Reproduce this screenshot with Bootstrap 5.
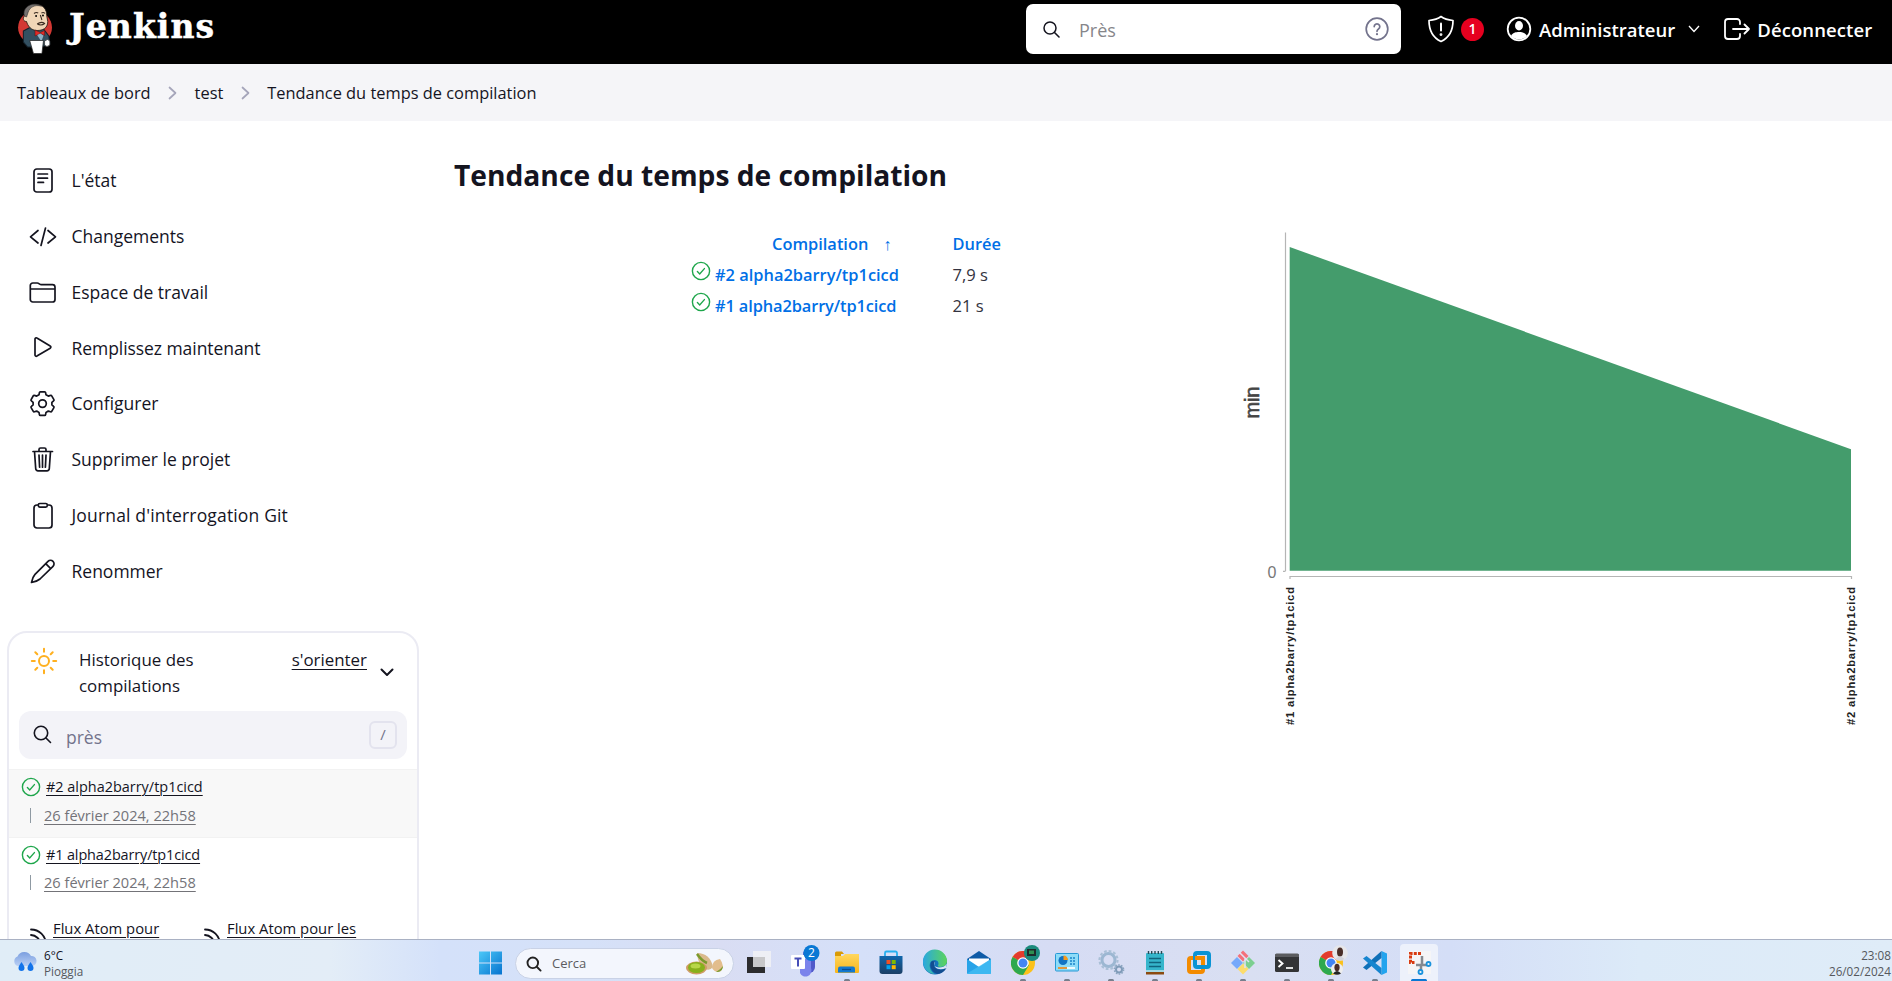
<!DOCTYPE html>
<html lang="fr">
<head>
<meta charset="utf-8">
<meta name="viewport" content="width=device-width, initial-scale=1">
<title>Tendance du temps de compilation [Jenkins]</title>
<link rel="stylesheet" href="https://cdn.jsdelivr.net/npm/bootstrap@5.3.0/dist/css/bootstrap.min.css">
<style>
body{font-family:"Open Sans","Noto Sans",sans-serif;color:#14141f;font-size:17.5px;line-height:1.4;background:#fff}
svg{display:block;flex:none}
a{color:inherit}
.screen{height:939px}
.topbar{height:64px;background:#000}
.brand-name{font-family:"DejaVu Serif",serif;font-weight:700;font-size:33px;letter-spacing:1.1px;line-height:40px;margin-left:17px;margin-top:7px;-webkit-text-stroke:.5px #fff}
.brand-logo{margin:3px 0 0 17px}
.top-search{width:375px;height:50px;margin:4px 0 0;border-radius:7px;padding:0 12px 0 16px}
.top-search .hint{font-size:18px;color:#86868a;margin-left:18px;padding-top:4px}
.top-tools{height:50px;margin-top:4px;font-size:18.5px;font-weight:600;width:491px;padding-left:26px}
.top-tools .lbl{padding-top:2px}
.alert-count{width:23px;height:23px;background:#e6001f;font-size:14px;margin-left:6px}
.crumbs{height:57px;background:#f5f5f8;padding:0 0 0 17px;font-size:16.4px}
.crumbs span{padding-top:2px}
.side{width:420px}
.tasks{padding-top:31.600px}
.task-link{height:55.8px;padding-left:28px;gap:14.5px;text-decoration:none}
.history{width:412px;height:330px;margin:31.800px 0 0 7px;border:2px solid #ebebf3;border-radius:20px}
.history-head{height:78px;padding:14px 23px 0 21px;font-size:16.9px}
.history-head .ttl{margin-left:21px;width:130px;line-height:26px}
.uline{text-decoration:underline;text-decoration-thickness:1px;text-underline-offset:3px}
.find{height:48px;background:#f3f3f8;border-radius:12px;margin:0 10px;padding:0 10px 0 14px;color:#73738c}
.keycap{width:28px;height:28px;border:2px solid #e3e3ee;border-radius:6px;font-size:15px}
.build-row{height:69px;font-size:14.450px;padding:7px 0 0 12px}
.build-row .when{color:#737378;font-size:14.6px;height:20px;margin-top:8px;padding-left:9px}
.build-row .bar{width:1px;height:15px;background:#8f9aa3;margin-right:13px}
.build-row.hot{background:#f8f8f8;margin-top:10px;border-top:1px solid #f2f2f2;border-bottom:1px solid #f2f2f2}
.tight{letter-spacing:-.12px}
.feeds{font-size:14.8px;padding:11px 0 0 21px}
.trend h1{font-size:28.2px;font-weight:700;line-height:40px;margin:34px 0 33px}
.times{margin-left:237px;width:330px}
.times .line{height:31px}
.times a,.times .th-link{color:#006fe6;font-weight:600;text-decoration:none;font-size:16.400px;padding-top:1px}
.times .c1{width:261.500px}
.times .dur{font-size:16.6px;color:#333340}
.taskbar{height:42px;border-top:1px solid #a9b1c3;background:linear-gradient(90deg,#e0edf7 0,#e3edf7 330px,#d4e1fa 440px,#d5e1f8 590px,#d9ddf3 720px,#d5e0f9 860px,#d6dcf4 1050px,#d9dff2 1250px,#d4def7 1450px,#dceaf8 1640px,#dfecf8 100%);font-size:11.7px}
.weather{width:468px;padding:7px 0 0 12px}
.weather .wt{line-height:16px;margin-left:6px}
.tb-search{width:219px;height:31px;border-radius:16px;background:#f3f6fd;border:1px solid #c9d2e6;margin:8px 3px 0 3px;padding:0 8px 0 10px;font-size:13px;color:#5b5b60}
.clock{line-height:16px;padding:7px 1px 0 0;color:#55585d}
</style>
</head>
<body class="overflow-hidden">
<svg width="0" height="0" class="position-absolute">
  <defs>
    <symbol id="ok" viewBox="0 0 20 20"><circle cx="10" cy="10" r="8.6" fill="none" stroke="#1ea64b" stroke-width="1.4"/><path d="M6.4 10.6l2.3 2.3 4.7-5.3" fill="none" stroke="#1ea64b" stroke-width="1.4" stroke-linecap="round"/></symbol>
    <symbol id="next" viewBox="0 0 10 14"><path d="M1.5 1.5l6 5.5-6 5.5" fill="none" stroke="#a5a5ba" stroke-width="1.7" stroke-linecap="round" stroke-linejoin="round"/></symbol>
    <symbol id="rss" viewBox="0 0 20 20"><path d="M1 2.5A15 15 0 0 1 16 17M1 8A10 10 0 0 1 10.5 17" fill="none" stroke="#14141f" stroke-width="1.8" stroke-linecap="round"/><circle cx="3" cy="15.5" r="2"/></symbol>
    <symbol id="chrome" viewBox="0 0 24 24"><circle cx="12" cy="12" r="12" fill="#fbc11b"/><path d="M12 12L1.6 6A12 12 0 0 1 22.4 6z" fill="#e33b2e"/><path d="M12 12L1.6 6A12 12 0 0 0 12 24l6-10z" fill="#2da94f"/><circle cx="12" cy="12" r="5.8" fill="#fff"/><circle cx="12" cy="12" r="4.5" fill="#4285f4"/></symbol>
    <linearGradient id="gWin" x1="0" y1="0" x2="1" y2="1"><stop offset="0" stop-color="#4cc8f8"/><stop offset="1" stop-color="#0673cf"/></linearGradient>
    <linearGradient id="gEdge" x1="0" y1="0" x2="1" y2="0"><stop offset="0" stop-color="#2aa8e0"/><stop offset="1" stop-color="#5bd45b"/></linearGradient>
    <linearGradient id="gStore" x1="0" y1="0" x2="0" y2="1"><stop offset="0" stop-color="#1067ad"/><stop offset="1" stop-color="#1b3f66"/></linearGradient>
    <linearGradient id="gFold" x1="0" y1="0" x2="0" y2="1"><stop offset="0" stop-color="#ffd75e"/><stop offset="1" stop-color="#f8b51c"/></linearGradient>
    <linearGradient id="gCloud" x1="0" y1="0" x2="0" y2="1"><stop offset="0" stop-color="#7b9fe0"/><stop offset="1" stop-color="#b9d0f5"/></linearGradient>
  </defs>
</svg>

<div class="screen overflow-hidden">
  <header class="topbar d-flex align-items-start text-white">
    <svg class="brand-logo" width="35" height="52" viewBox="0 0 33 52" preserveAspectRatio="none">
      <ellipse cx="17" cy="24.500" rx="16" ry="16.500" fill="#d33833"/>
      <path d="M6 28l7-4 12 2 5 7 1 8-8 3H10l-4-5z" fill="#335061" stroke="#14212b"/>
      <path d="M7 13C6 6 12 1 18 1.500c7 0 10 5 10 11l1 6c0 7-5 9-10 9-6 0-9-5-10-9-3 0-4-3-2-5.500z" fill="#f0d6b7" stroke="#221a14" stroke-width=".8"/>
      <path d="M7 13C5 6 11 .800 17 1.200c3 0 5 1 6 2-6-2-11 1-12.500 6L9 14z" fill="#74706e" stroke="#333" stroke-width=".6"/>
      <path d="M16 10.500q2-1.500 4-.500M23 10q2-1 3.500.500M19 21q4-3 7-.500q-3 2.500-7 .5M22 12l1.500 5" fill="none" stroke="#3a2c22" stroke-width="1"/>
      <circle cx="18" cy="13" r=".9"/><circle cx="24.500" cy="12.500" r=".9"/>
      <path d="M17 27l5 2.500 4-2v5l-4-2-5 2.500z" fill="#e02a27" stroke="#5a0f0f" stroke-width=".5"/>
      <path d="M19 32l3-1.500 3 2-2 6z" fill="#8fb0c4"/>
      <path d="M12 37.500h13l-1.500 13h-8z" fill="#fff" stroke="#222" stroke-width=".7"/>
      <path d="M26 38q3-3 5 0v4q-3 3-5 0z" fill="#fff" stroke="#333" stroke-width=".7"/>
    </svg>
    <div class="brand-name">Jenkins</div>
    <div class="top-search bg-white ms-auto d-flex align-items-center">
      <svg width="19" height="19" viewBox="0 0 19 19"><circle cx="8" cy="8" r="6" fill="none" stroke="#14141f" stroke-width="1.500"/><path d="M12.500 12.500l4.500 4.500" stroke="#14141f" stroke-width="1.600" stroke-linecap="round"/></svg>
      <span class="hint">Près</span>
      <svg class="ms-auto" width="24" height="24" viewBox="0 0 24 24"><circle cx="12" cy="12" r="10.800" fill="none" stroke="#73738c" stroke-width="1.700"/><path d="M9.200 9.600a2.800 2.800 0 1 1 4.300 2.400c-1 .7-1.500 1.100-1.500 2.300" fill="none" stroke="#73738c" stroke-width="1.700" stroke-linecap="round"/><circle cx="12" cy="17.200" r="1.100" fill="#73738c"/></svg>
    </div>
    <div class="top-tools d-flex align-items-center">
      <svg width="28" height="28" viewBox="0 0 28 28" fill="none" stroke="#fff" stroke-width="1.700" stroke-linejoin="round" stroke-linecap="round"><path d="M14 1.500c3 2.300 7 3.500 12 4C26 15 22.500 22.500 14 26.500 5.500 22.500 2 15 2 5.500c5-.5 9-1.700 12-4z"/><path d="M14 8.500v7" stroke-width="2"/><circle cx="14" cy="19.600" r=".6"/></svg>
      <span class="alert-count rounded-circle d-flex align-items-center justify-content-center">1</span>
      <svg style="margin-left:22px" width="26" height="26" viewBox="0 0 26 26"><circle cx="13" cy="13" r="11.300" fill="none" stroke="#fff" stroke-width="1.800"/><ellipse cx="13" cy="9.800" rx="4" ry="4.700" fill="#fff"/><path d="M5 20c1.500-3.500 5-4 8-4s6.500.5 8 4c-4 4.500-12 4.500-16 0z" fill="#fff"/></svg>
      <span class="lbl" style="margin-left:7px">Administrateur</span>
      <svg style="margin-left:13px" width="12" height="8" viewBox="0 0 12 8"><path d="M1 1l5 5.500L11 1" fill="none" stroke="#fff" stroke-width="1.300"/></svg>
      <svg style="margin-left:24px" width="26" height="22" viewBox="0 0 26 22" fill="none" stroke="#fff" stroke-width="1.800" stroke-linecap="round" stroke-linejoin="round"><path d="M16 6V4a3 3 0 0 0-3-3H4a3 3 0 0 0-3 3v14a3 3 0 0 0 3 3h9a3 3 0 0 0 3-3v-2M9 11h16M20.500 6.500L25 11l-4.500 4.500"/></svg>
      <span class="lbl" style="margin-left:7px;letter-spacing:.1px">Déconnecter</span>
    </div>
  </header>

  <nav class="crumbs d-flex align-items-center">
    <span>Tableaux de bord</span>
    <svg style="margin:0 17px 0 17px" width="10" height="14"><use href="#next"/></svg>
    <span>test</span>
    <svg style="margin:0 16px 0 18px" width="10" height="14"><use href="#next"/></svg>
    <span>Tendance du temps de compilation</span>
  </nav>

  <div class="d-flex">
    <aside class="side flex-shrink-0">
      <div class="tasks d-flex flex-column">
        <a class="task-link d-flex align-items-center"><svg width="29" height="29" viewBox="0 0 29 29" fill="none" stroke="#14141f" stroke-width="1.700" stroke-linecap="round"><rect x="6" y="3" width="18" height="23" rx="2.800"/><path d="M10 8h9.500M10 12.200h9.500M10 16.400h5.500"/></svg><span>L'état</span></a>
        <a class="task-link d-flex align-items-center"><svg width="29" height="29" viewBox="0 0 29 29" fill="none" stroke="#14141f" stroke-width="1.700" stroke-linecap="round" stroke-linejoin="round"><path d="M10 8.500L2.500 14.800 10 21M20 8.500l7.500 6.300L20 21M17.500 6L13 23.500"/></svg><span>Changements</span></a>
        <a class="task-link d-flex align-items-center"><svg width="29" height="29" viewBox="0 0 29 29" fill="none" stroke="#14141f" stroke-width="1.700" stroke-linejoin="round"><path d="M2.300 7.500a2.500 2.500 0 0 1 2.500-2.500h4.500c1.500 0 2.500 1.700 4 1.700H24.500a2.500 2.500 0 0 1 2.500 2.500V21.500a2.500 2.500 0 0 1-2.500 2.500H4.800a2.500 2.500 0 0 1-2.500-2.500zM2.300 11H27"/></svg><span>Espace de travail</span></a>
        <a class="task-link d-flex align-items-center"><svg width="29" height="29" viewBox="0 0 29 29" fill="none" stroke="#14141f" stroke-width="1.700" stroke-linejoin="round"><path d="M7 6v16c0 1 1 1.600 1.900 1.100l13.300-7.900c.9-.5.9-1.700 0-2.200L8.900 5C8 4.400 7 5 7 6z"/></svg><span style="letter-spacing:-.06px">Remplissez maintenant</span></a>
        <a class="task-link d-flex align-items-center"><svg width="29" height="29" viewBox="0 0 29 29" fill="none" stroke="#14141f" stroke-width="1.700" stroke-linejoin="round"><path d="M12.300 2.800h4.400q.8 0 .9.8l.4 2.200 2.300 1.300 2.200-.7q.8-.3 1.200.4l2.200 3.800q.4.700-.3 1.200l-1.700 1.500v2.600l1.700 1.500q.7.500.3 1.200l-2.200 3.800q-.4.700-1.200.4l-2.200-.7-2.300 1.300-.4 2.200q-.1.800-.9.800h-4.400q-.8 0-.9-.8l-.4-2.200-2.300-1.300-2.200.7q-.8.3-1.200-.4l-2.200-3.800q-.4-.7.3-1.200l1.700-1.500v-2.600l-1.700-1.500q-.7-.5-.3-1.200l2.200-3.800q.4-.7 1.200-.4l2.200.7L11 5.800l.4-2.200q.1-.8.900-.8z"/><circle cx="14.500" cy="14.600" r="3.800"/></svg><span>Configurer</span></a>
        <a class="task-link d-flex align-items-center"><svg width="29" height="29" viewBox="0 0 29 29" fill="none" stroke="#14141f" stroke-width="1.700" stroke-linecap="round" stroke-linejoin="round"><path d="M5 6.500h19.500M11 6.200V4.500A1.500 1.500 0 0 1 12.500 3h4A1.500 1.500 0 0 1 18 4.500v1.700M6.500 6.500l1.200 17a2.300 2.300 0 0 0 2.300 2.300h9a2.300 2.300 0 0 0 2.300-2.300l1.200-17M11 10l.6 12.200M14.500 10v12.200M18 10l-.6 12.200"/></svg><span>Supprimer le projet</span></a>
        <a class="task-link d-flex align-items-center"><svg width="29" height="29" viewBox="0 0 29 29" fill="none" stroke="#14141f" stroke-width="1.700" stroke-linejoin="round"><rect x="6" y="4" width="18" height="23" rx="3"/><rect x="10.300" y="2.500" width="9" height="3.600" rx="1.500" fill="#fff"/></svg><span style="letter-spacing:.16px">Journal d'interrogation Git</span></a>
        <a class="task-link d-flex align-items-center"><svg width="29" height="29" viewBox="0 0 29 29" fill="none" stroke="#14141f" stroke-width="1.700" stroke-linejoin="round"><path d="M20 4.300a3.400 3.400 0 0 1 5 5L12 22q-3 2.500-8.500 3.500 1-5.500 3.500-8.200zM17.700 6.600l5 5"/></svg><span>Renommer</span></a>
      </div>

      <section class="history">
        <div class="history-head d-flex align-items-start">
          <svg width="28" height="28" viewBox="0 0 28 28" fill="none" stroke="#ffb01f" stroke-width="2" stroke-linecap="round"><circle cx="14" cy="14" r="5"/><path d="M14 1.800v3M14 23.200v3M1.800 14h3M23.200 14h3M5.300 5.300l2 2M20.700 20.700l2 2M22.700 5.300l-2 2M5.300 22.700l2-2"/></svg>
          <div class="ttl">Historique des compilations</div>
          <a class="uline ms-auto" style="line-height:26px">s'orienter</a>
          <svg style="margin:21px 0 0 13px" width="14" height="10" viewBox="0 0 14 10"><path d="M1.500 1.500L7 7l5.500-5.500" fill="none" stroke="#14141f" stroke-width="2" stroke-linecap="round" stroke-linejoin="round"/></svg>
        </div>
        <div class="find d-flex align-items-center">
          <svg width="19" height="19" viewBox="0 0 19 19" fill="none" stroke="#14141f" stroke-width="1.600" stroke-linecap="round"><circle cx="8" cy="8" r="6.700"/><path d="M13 13l4.500 4.500"/></svg>
          <span style="margin-left:14px;padding-top:4px">près</span>
          <span class="keycap ms-auto d-flex align-items-center justify-content-center">/</span>
        </div>
        <div class="build-row hot">
          <div class="d-flex align-items-center"><svg width="20" height="20"><use href="#ok"/></svg><a class="uline" style="margin-left:5px">#2 alpha2barry/tp1cicd</a></div>
          <div class="when d-flex align-items-center"><span class="bar"></span><a class="uline">26 février 2024, 22h58</a></div>
        </div>
        <div class="build-row">
          <div class="d-flex align-items-center"><svg width="20" height="20"><use href="#ok"/></svg><a class="uline tight" style="margin-left:5px">#1 alpha2barry/tp1cicd</a></div>
          <div class="when d-flex align-items-center" style="margin-top:7px"><span class="bar"></span><a class="uline">26 février 2024, 22h58</a></div>
        </div>
        <div class="feeds d-flex align-items-start">
          <svg style="margin-top:9px" width="20" height="20"><use href="#rss"/></svg>
          <a class="uline text-nowrap" style="width:151px;margin-left:3px">Flux Atom pour</a>
          <svg style="margin-top:9px" width="20" height="20"><use href="#rss"/></svg>
          <a class="uline text-nowrap" style="margin-left:3px">Flux Atom pour les</a>
        </div>
      </section>
    </aside>

    <main class="trend flex-grow-1" style="padding-left:34px">
      <h1>Tendance du temps de compilation</h1>
      <div class="d-flex align-items-start">
        <div class="times">
          <div class="line d-flex align-items-center"><span class="c1 th-link" style="padding-left:81px">Compilation<span class="fw-normal" style="margin-left:15px">↑</span></span><span class="th-link">Durée</span></div>
          <div class="line d-flex align-items-center"><span class="c1 d-flex align-items-center"><svg style="margin-top:-7px" width="20" height="20"><use href="#ok"/></svg><a class="ms-1">#2 alpha2barry/tp1cicd</a></span><span class="dur">7,9 s</span></div>
          <div class="line d-flex align-items-center"><span class="c1 d-flex align-items-center"><svg style="margin-top:-7px" width="20" height="20"><use href="#ok"/></svg><a class="ms-1 tight">#1 alpha2barry/tp1cicd</a></span><span class="dur">21 s</span></div>
        </div>
        <svg class="ms-auto me-3" width="640" height="510" viewBox="1236 228 640 510" font-family="Liberation Sans, Arial, sans-serif">
          <path d="M1285.500 232.500V571M1283 571.300h2.500M1290 579v-2.500h561.500v2.500" fill="none" stroke="#b5b5b5" stroke-width="1.200"/>
          <path d="M1289.700 247L1851 449.200V570.800H1289.700z" fill="#449c6c"/>
          <text x="1267.500" y="577.500" font-size="16" fill="#777">0</text>
          <text transform="translate(1258.500 418.500) rotate(-90)" font-size="20" fill="#444" stroke="#444" stroke-width=".6" textLength="32">min</text>
          <text transform="translate(1294 725) rotate(-90)" font-size="11.200" font-weight="700" fill="#222" textLength="138">#1 alpha2barry/tp1cicd</text>
          <text transform="translate(1855 725) rotate(-90)" font-size="11.200" font-weight="700" fill="#222" textLength="138">#2 alpha2barry/tp1cicd</text>
        </svg>
      </div>
    </main>
  </div>
</div>

<footer class="taskbar d-flex align-items-start overflow-hidden">
  <div class="weather d-flex flex-shrink-0">
    <svg width="26" height="30" viewBox="0 0 26 30"><path d="M6 19a5 5 0 0 1-.5-9.500A7.500 7.500 0 0 1 19 9a5 5 0 0 1 1 10z" fill="url(#gCloud)"/><path d="M9.500 15c2 3 3 4.500 3 6a3 3 0 0 1-6 0c0-1.500 1-3 3-6zM18.500 15c2 3 3 4.500 3 6a3 3 0 0 1-6 0c0-1.500 1-3 3-6z" fill="#1273ea"/></svg>
    <div class="wt text-nowrap"><div>6°C</div><div style="color:#55585d">Pioggia</div></div>
  </div>
  <svg width="44" height="42" viewBox="0 1 44 42"><path d="M11 12.500h11v11H11zM23 12.500h11v11H23zM11 24.500h11v11H11zM23 24.500h11v11H23z" fill="url(#gWin)"/></svg>
  <div class="tb-search d-flex align-items-center flex-shrink-0">
    <svg width="16" height="16" viewBox="0 0 16 16" fill="none" stroke="#222" stroke-width="1.900" stroke-linecap="round"><circle cx="6.800" cy="6.800" r="5.300"/><path d="M11 11l3.600 3.600"/></svg>
    <span style="margin-left:10px">Cerca</span>
    <svg class="ms-auto" width="40" height="24" viewBox="0 0 40 24"><path d="M12 1q13 0 16 14-3 4-8 2-7-4-8-16z" fill="#d9b98c"/><path d="M12 2q5 7 10 9" stroke="#7a9a2c" stroke-width="2.500" fill="none"/><ellipse cx="11.500" cy="16" rx="10.500" ry="6.500" fill="#cf9c66"/><ellipse cx="11.500" cy="15.500" rx="8.500" ry="5.500" fill="#88b01c"/><ellipse cx="10.500" cy="14" rx="5" ry="2.500" fill="#b8d648"/><path d="M27 16q0-8 8-9 5 7 1 12-5 3-9-3z" fill="#e2bd8d"/><path d="M31 20q5-3 7-6 0 5-5 6z" fill="#7f9d34"/></svg>
  </div>
  <svg width="44" height="42" viewBox="0 1 44 42"><path d="M10 18h18v16H10z" fill="#2c2c2e"/><path d="M16 12h18v16H16z" fill="#f3f3f5" fill-opacity=".78"/></svg>
  <svg width="44" height="42" viewBox="0 1 44 42"><circle cx="27" cy="15" r="5" fill="#5059c9"/><path d="M26 20h8v8a6 6 0 0 1-6 6z" fill="#5059c9"/><path d="M19 20h11v9a5.500 5.500 0 0 1-11 5z" fill="#7b83eb"/><rect x="10" y="16" width="14" height="14" rx="1" fill="#fff"/><path d="M13.500 19.500h7M17 19.500v8" stroke="#464eb8" stroke-width="2"/><circle cx="30.500" cy="14" r="8" fill="#0a78d4"/><text x="30.500" y="18.200" text-anchor="middle" font-size="12" fill="#fff">2</text></svg>
  <svg width="44" height="42" viewBox="0 1 44 42"><path d="M10 14a1.500 1.500 0 0 1 1.500-1.500H17l2 2.500h-3v6h-6z" fill="#d99a06"/><path d="M10 17h8l2-2h14v18a1 1 0 0 1-1 1H11a1 1 0 0 1-1-1z" fill="url(#gFold)"/><path d="M13 33.500v-4a2 2 0 0 1 2-2h13a2 2 0 0 1 2 2v4z" fill="#1379d1"/><path d="M17 30.500h9" stroke="#0a4d92" stroke-width="1.300"/><rect x="19" y="40" width="6" height="4" rx="1.500" fill="#777f8d"/></svg>
  <svg width="44" height="42" viewBox="0 1 44 42"><path d="M16 18v-4a1.500 1.500 0 0 1 1.500-1.500h9A1.500 1.500 0 0 1 28 14v4" fill="none" stroke="#27b0ef" stroke-width="1.800"/><path d="M10.500 17h23v15a3 3 0 0 1-3 3h-17a3 3 0 0 1-3-3z" fill="url(#gStore)"/><path d="M17.500 21h4v4h-4z" fill="#f25022"/><path d="M22.700 21h4v4h-4z" fill="#7fba00"/><path d="M17.500 26.200h4v4h-4z" fill="#00a4ef"/><path d="M22.700 26.200h4v4h-4z" fill="#ffb900"/></svg>
  <svg width="44" height="42" viewBox="0 1 44 42"><circle cx="22" cy="23.500" r="12" fill="#1473bd"/><path d="M10 23a12 12 0 0 1 24-1c0 6-7 7-9.500 5 2-2 1-6-3-6-6 0-7 9 0 14-7-.5-11.500-6-11.500-12z" fill="url(#gEdge)"/><path d="M19 22c-3 3-2 10 5 13 4 0 8-3 9.500-6-5 3-12 2-12.500-3 0-1.500.5-2.500 1.500-3.500z" fill="#124d91"/><path d="M22 22.500c-2 2-1 6 4 6 3 0 6-1 8-4l-1 4.500c-6 3-14 .5-11-6.500z" fill="#dbe4f6"/></svg>
  <svg width="44" height="42" viewBox="0 1 44 42"><path d="M10 20l12-8 12 8v3H10z" fill="#0f5ba7"/><path d="M12 19.500h20v8H12z" fill="#fff"/><path d="M10 20l12 8 12-8v14a1 1 0 0 1-1 1H11a1 1 0 0 1-1-1z" fill="#28a3e8"/><path d="M10 34.500L34 20v14a1 1 0 0 1-1 1H11z" fill="#46c0f5" opacity=".7"/></svg>
  <svg width="44" height="42" viewBox="0 1 44 42"><use href="#chrome" x="10" y="12" width="24" height="24"/><circle cx="31" cy="14" r="8" fill="#1c8a7c"/><rect x="26" y="10" width="9" height="7" fill="#1d2b2c"/><rect x="28" y="11.500" width="5" height="3.500" fill="#2f8f50"/><rect x="19" y="40" width="6" height="4" rx="1.500" fill="#777f8d"/></svg>
  <svg width="44" height="42" viewBox="0 1 44 42"><rect x="10.500" y="14.500" width="23" height="17.500" rx="1" fill="#8edcf8" stroke="#2699d6"/><circle cx="18" cy="21.500" r="4.500" fill="#1273c4"/><path d="M18.500 21V16.500a4.500 4.500 0 0 1 4.500 4.500z" fill="#f79b1b"/><path d="M25 19h5M25 22h5M25 25h5" stroke="#1d84c9" stroke-width="1.500" stroke-dasharray="2 1"/><path d="M13 29h9" stroke="#f08c1d" stroke-width="1.700"/><path d="M22 29h8" stroke="#fff" stroke-width="1.700"/><rect x="19" y="40" width="6" height="4" rx="1.500" fill="#777f8d"/></svg>
  <svg width="44" height="42" viewBox="0 1 44 42" fill="none"><circle cx="19.500" cy="21" r="6.500" stroke="#9cb7d2" stroke-width="3"/><circle cx="19.500" cy="21" r="9" stroke="#a9bfd6" stroke-width="2.200" stroke-dasharray="2.700 2"/><circle cx="30" cy="30.500" r="3" stroke="#7f9bb8" stroke-width="2"/><circle cx="30" cy="30.500" r="4.600" stroke="#8ba5c0" stroke-width="1.500" stroke-dasharray="1.600 1.300"/><rect x="19" y="40" width="6" height="4" rx="1.500" fill="#777f8d"/></svg>
  <svg width="44" height="42" viewBox="0 1 44 42"><rect x="13" y="14" width="18" height="21" rx="1" fill="#35b5cb"/><path d="M13 33h18v2.500H13z" fill="#8b4a10"/><path d="M13 32h18" stroke="#f2f2f2" stroke-width="1.200"/><path d="M16 19.500h12M16 23.500h12M16 27.500h12" stroke="#10647e" stroke-width="1.700"/><path d="M15.500 12v3M18.700 12v3M22 12v3M25.300 12v3M28.500 12v3" stroke="#274a55" stroke-width="1.400"/><rect x="19" y="40" width="6" height="4" rx="1.500" fill="#777f8d"/></svg>
  <svg width="44" height="42" viewBox="0 1 44 42" fill="none" stroke-width="4"><rect x="12" y="19" width="14" height="14" rx="2" stroke="#f38b00"/><rect x="18" y="14" width="14" height="14" rx="2" stroke="#0a93d4"/><path d="M18 19h8v7" stroke="#f38b00"/><rect x="19" y="40" width="6" height="4" rx="1.500" fill="#777f8d"/></svg>
  <svg width="44" height="42" viewBox="0 1 44 42"><path d="M22 11.500l5.500 5.500-5.500 5.500-5.500-5.500z" fill="#f4717a"/><path d="M16 18l6 6-6 6-6-6z" fill="#76a9fa"/><path d="M28 18l6 6-6 6-6-6z" fill="#7ccf90"/><path d="M22 24.500l5.500 5.500-5.500 5.500-5.500-5.500z" fill="#fcdc6c"/><path d="M18 13l6 6v10M24 19l4 4" stroke="#dfe4f4" stroke-width="1.500" fill="none"/><rect x="19" y="40" width="6" height="4" rx="1.500" fill="#777f8d"/></svg>
  <svg width="44" height="42" viewBox="0 1 44 42"><rect x="10" y="15" width="24" height="18" rx="1.500" fill="#333436"/><path d="M10 18v-2a1.500 1.500 0 0 1 1.500-1.500h21A1.500 1.500 0 0 1 34 16v2z" fill="#5b5c5f"/><path d="M13.500 21l4 3.500-4 3.500" fill="none" stroke="#fff" stroke-width="1.900"/><path d="M21 29h7" stroke="#fff" stroke-width="1.700"/><rect x="19" y="40" width="6" height="4" rx="1.500" fill="#777f8d"/></svg>
  <svg width="44" height="42" viewBox="0 1 44 42"><use href="#chrome" x="10" y="12" width="24" height="24"/><circle cx="31" cy="14" r="7.800" fill="#e6e6ea"/><ellipse cx="31" cy="13" rx="3" ry="4.500" fill="#4a2e28"/><path d="M26.500 20q4.500-5 9 0-4.500 3-9 0z" fill="#d3d3da"/><circle cx="28" cy="30" r="6" fill="#eee"/><ellipse cx="28" cy="28.500" rx="2.600" ry="3.700" fill="#4a2e28"/><path d="M24 34.500q4-5 8 0-4 2.500-8 0z" fill="#222"/><rect x="19" y="40" width="6" height="4" rx="1.500" fill="#777f8d"/></svg>
  <svg width="44" height="42" viewBox="0 1 44 42"><path d="M28.500 12l5.500 2.500v19L28.500 36z" fill="#23a4ee"/><path d="M28.500 12v7L13.500 31 10 28.500z" fill="#0f70b8"/><path d="M28.500 36v-7L13.500 17 10 19.500z" fill="#1685cf"/><rect x="19" y="40" width="6" height="4" rx="1.500" fill="#777f8d"/></svg>
  <svg width="44" height="42" viewBox="0 1 44 42"><rect x="3" y="5" width="38" height="40" rx="4" fill="#edf1fb"/><rect x="11" y="12" width="23" height="23" fill="#f5f5f7"/><path d="M24 14.500H13.500V23.500h4" fill="none" stroke="#d83b12" stroke-width="3" stroke-dasharray="3 1.200"/><path d="M25 17v9h5M19 26h5v5" fill="none" stroke="#858a91" stroke-width="2.500"/><circle cx="31.500" cy="25" r="2" fill="none" stroke="#1b93dd" stroke-width="1.800"/><circle cx="23.500" cy="33" r="2" fill="none" stroke="#1b93dd" stroke-width="1.800"/><rect x="14" y="40" width="16" height="4" rx="1.500" fill="#0a78d4"/></svg>
  <div class="clock ms-auto text-end text-nowrap"><div>23:08</div><div>26/02/2024</div></div>
</footer>
<script src="https://cdn.jsdelivr.net/npm/bootstrap@5.3.0/dist/js/bootstrap.bundle.min.js"></script>
</body>
</html>
